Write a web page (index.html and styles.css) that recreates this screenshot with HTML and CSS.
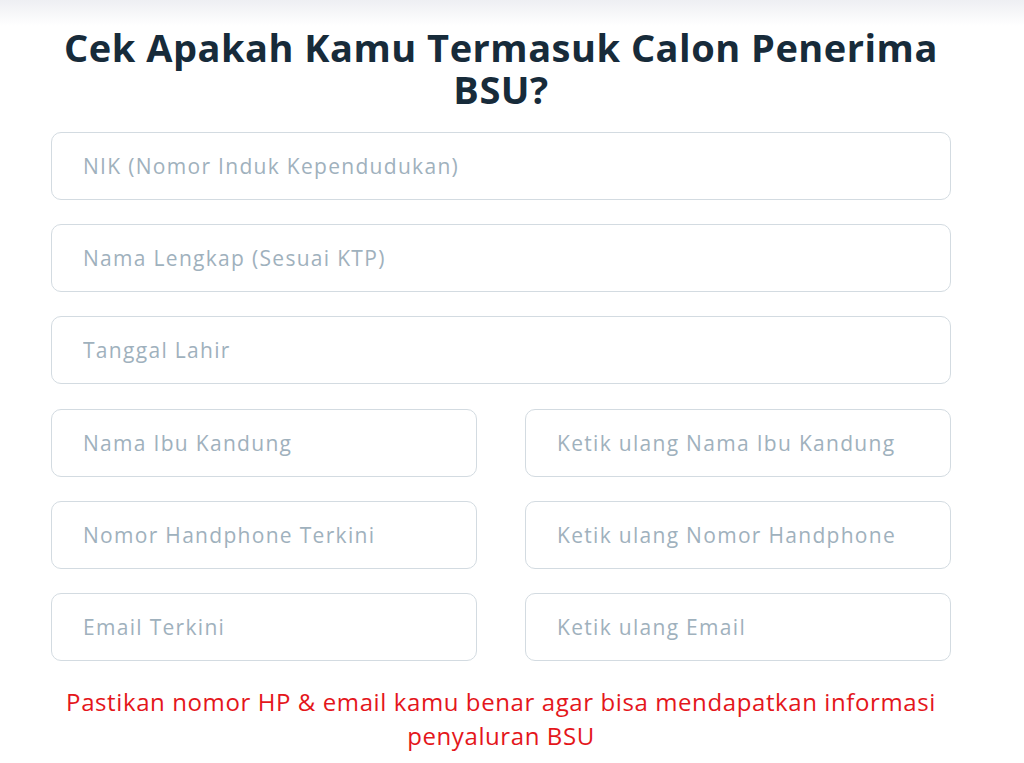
FILE: index.html
```html
<!DOCTYPE html>
<html lang="id">
<head>
  <meta charset="UTF-8" />
  <meta name="viewport" content="width=device-width, initial-scale=1.0"/>
  <title>Cek BSU</title>
  <link rel="stylesheet" href="styles.css">
</head>
<body>
  <div class="topbar"></div>

  <div class="container">
    <h1>Cek Apakah Kamu Termasuk Calon Penerima BSU?</h1>

    <form class="form">
      <input type="text" placeholder="NIK (Nomor Induk Kependudukan)" />
      <input type="text" placeholder="Nama Lengkap (Sesuai KTP)" />
      <input type="text" placeholder="Tanggal Lahir" />

      <div class="row">
        <input type="text" placeholder="Nama Ibu Kandung" />
        <input type="text" placeholder="Ketik ulang Nama Ibu Kandung" />
      </div>

      <div class="row">
        <input type="text" placeholder="Nomor Handphone Terkini" />
        <input type="text" placeholder="Ketik ulang Nomor Handphone" />
      </div>

      <div class="row">
        <input type="text" placeholder="Email Terkini" />
        <input type="text" placeholder="Ketik ulang Email" />
      </div>
    </form>

    <p class="note">Pastikan nomor HP &amp; email kamu benar agar bisa mendapatkan informasi penyaluran BSU</p>
  </div>
</body>
</html>
```

FILE: styles.css
```css
body {
  font-family: "Open Sans", "Lato", sans-serif;
  background: #fff;
  margin: 0;
  padding: 0;
}

.topbar {
  height: 26px;
  background: linear-gradient(#eeeff3, #fff);
}

.container {
  width: 900px;
  margin-left: 51px;
}

h1 {
  text-align: center;
  font-size: 38px;
  line-height: 42px;
  letter-spacing: 0.5px;
  font-weight: 700;
  color: #172b3a;
  margin: 0 0 22px;
  padding: 0 10px;
}

.form {
  display: flex;
  flex-direction: column;
  gap: 24px;
}

.row {
  display: flex;
  gap: 48px;
}

.form .row:first-of-type {
  margin-top: 1px;
}

input {
  box-sizing: border-box;
  width: 100%;
  height: 68px;
  padding: 0 31px;
  border: 1px solid #d3dbe1;
  border-radius: 10px;
  font-family: inherit;
  font-size: 21px;
  letter-spacing: 1.3px;
  color: #333;
  background: #fff;
  outline: none;
}

.row input {
  flex: 1;
  min-width: 0;
}

input::placeholder {
  color: #9fb1bd;
}

.note {
  text-align: center;
  color: #e4161b;
  font-size: 24px;
  line-height: 34px;
  letter-spacing: 0.6px;
  margin: 24px 0 0;
  padding: 0 10px;
}
```
